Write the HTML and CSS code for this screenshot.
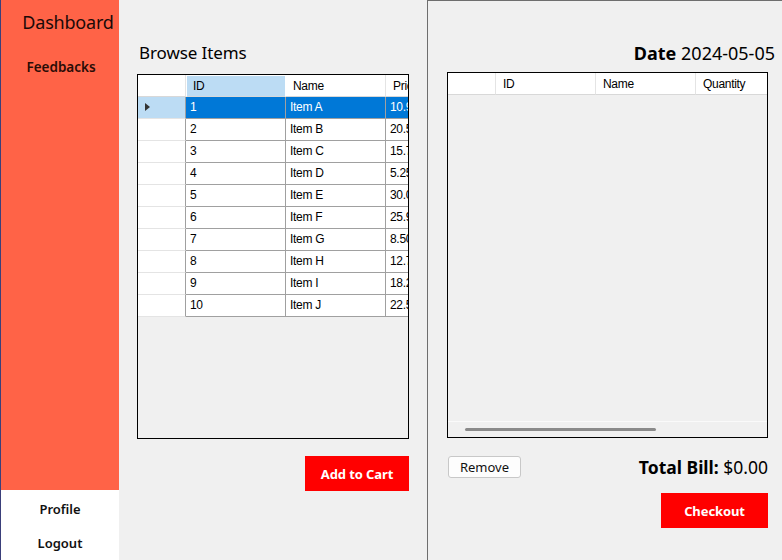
FILE: index.html
```html
<!DOCTYPE html>
<html>
<head>
<meta charset="utf-8">
<link rel="stylesheet" href="styles.css">
</head>
<body>
<div class="app">
  <aside class="sidebar">
    <div class="side-top">
      <div class="brand">Dashboard</div>
      <div class="side-link">Feedbacks</div>
    </div>
    <div class="side-bottom">
      <div class="side-link">Profile</div>
      <div class="side-link">Logout</div>
    </div>
  </aside>

  <section class="browse">
    <h1 class="title">Browse Items</h1>
    <div class="grid grid-items">
      <div class="row head">
        <div class="rh"></div>
        <div class="hc sel-col">ID</div>
        <div class="hc">Name</div>
        <div class="hc">Price</div>
      </div>
      <div class="row selected">
        <div class="rh"><span class="arrow"></span></div>
        <div class="c">1</div><div class="c">Item A</div><div class="c">10.99</div>
      </div>
      <div class="row"><div class="rh"></div><div class="c">2</div><div class="c">Item B</div><div class="c">20.50</div></div>
      <div class="row"><div class="rh"></div><div class="c">3</div><div class="c">Item C</div><div class="c">15.75</div></div>
      <div class="row"><div class="rh"></div><div class="c">4</div><div class="c">Item D</div><div class="c">5.25</div></div>
      <div class="row"><div class="rh"></div><div class="c">5</div><div class="c">Item E</div><div class="c">30.00</div></div>
      <div class="row"><div class="rh"></div><div class="c">6</div><div class="c">Item F</div><div class="c">25.99</div></div>
      <div class="row"><div class="rh"></div><div class="c">7</div><div class="c">Item G</div><div class="c">8.50</div></div>
      <div class="row"><div class="rh"></div><div class="c">8</div><div class="c">Item H</div><div class="c">12.75</div></div>
      <div class="row"><div class="rh"></div><div class="c">9</div><div class="c">Item I</div><div class="c">18.25</div></div>
      <div class="row"><div class="rh"></div><div class="c">10</div><div class="c">Item J</div><div class="c">22.50</div></div>
    </div>
    <div class="actions">
      <button class="btn-red add">Add to Cart</button>
    </div>
  </section>

  <section class="cart">
    <div class="date"><b>Date</b> 2024-05-05</div>
    <div class="grid grid-cart">
      <div class="row head">
        <div class="rh"></div>
        <div class="hc">ID</div>
        <div class="hc">Name</div>
        <div class="hc">Quantity</div>
      </div>
      <div class="cart-body"></div>
      <div class="hscroll"><div class="thumb"></div></div>
    </div>
    <div class="cart-foot">
      <button class="btn-remove">Remove</button>
      <div class="total"><b>Total Bill:</b> $0.00</div>
    </div>
    <div class="checkout-row">
      <button class="btn-red checkout">Checkout</button>
    </div>
  </section>
</div>
</body>
</html>
```

FILE: styles.css
```css
* { box-sizing: border-box; }
html, body { margin: 0; padding: 0; }
body {
  width: 782px;
  height: 560px;
  overflow: hidden;
  background: #f0f0f0;
  font-family: "Noto Sans", "Open Sans", sans-serif;
  color: #000;
}
.app {
  display: flex;
  height: 560px;
}

/* Sidebar */
.sidebar {
  width: 119px;
  flex: none;
  display: flex;
  flex-direction: column;
  border-left: 1px solid #3a3f7a;
}
.side-top {
  flex: 1;
  background: #ff6347;
  display: flex;
  flex-direction: column;
  align-items: center;
}
.brand {
  font-size: 18px;
  margin-top: 10px;
  padding-left: 16px;
  letter-spacing: -0.2px;
  color: #1a0a08;
}
.side-link {
  font-size: 13px;
  font-weight: 600;
  text-align: center;
  color: #111;
}
.side-top .side-link {
  margin-top: 24px;
  font-size: 13.5px;
  padding-left: 2px;
  color: #2a0c06;
}
.side-bottom {
  height: 70px;
  background: #fff;
  display: flex;
  flex-direction: column;
  justify-content: space-around;
  padding: 2px 0 0;
}

/* Browse section */
.browse {
  width: 308px;
  flex: none;
  padding: 42px 0 0 18px;
  display: flex;
  flex-direction: column;
}
.title {
  margin: 0 0 10px 2px;
  font-size: 17px;
  font-weight: 400;
  line-height: 22px;
  letter-spacing: -0.1px;
}

/* Data grids */
.grid {
  border: 1px solid #000;
  background: #f0f0f0;
  overflow: hidden;
  font-family: "Liberation Sans", Arial, sans-serif;
  font-size: 12px;
  letter-spacing: -0.3px;
}
.grid-items {
  width: 272px;
  height: 365px;
}
.row {
  display: grid;
  grid-template-columns: 48px 100px 100px 100px;
  height: 22px;
}
.row > div {
  height: 22px;
  line-height: 21px;
  white-space: nowrap;
  overflow: hidden;
}
.rh {
  background: #fff;
  border-right: 1px solid #a0a0a0;
  border-bottom: 1px solid #e4e4e4;
  position: relative;
}
.head .rh {
  border-right: 1px solid #e4e4e4;
  border-bottom: 1px solid #d8d8d8;
}
.row > .hc {
  background: #fff;
  padding-left: 7px;
  line-height: 23px;
  border-right: 1px solid #e4e4e4;
  border-bottom: 1px solid #d8d8d8;
}
.row > .hc.sel-col {
  background: #bcdcf4;
  border-right: 1px solid #fff;
  border-left: 1px solid #fff;
  border-top: 1px solid #fff;
  line-height: 21px;
  padding-left: 6px;
}
.c {
  background: #fff;
  padding-left: 4px;
  border-right: 1px solid #a0a0a0;
  border-bottom: 1px solid #a0a0a0;
}
.selected .c {
  background: #0078d7;
  color: #fff;
}
.selected .rh {
  background: #bcdcf4;
}
.arrow {
  position: absolute;
  left: 7px;
  top: 6px;
  width: 0;
  height: 0;
  border-top: 4px solid transparent;
  border-bottom: 4px solid transparent;
  border-left: 5px solid #333;
}

/* Actions */
.actions {
  display: flex;
  justify-content: flex-end;
  width: 272px;
  margin-top: 17px;
}
.btn-red {
  background: #ff0000;
  color: #fff;
  border: none;
  font-family: "Noto Sans", "Open Sans", sans-serif;
  font-weight: 700;
  font-size: 13px;
  padding: 0;
  letter-spacing: -0.1px;
}
.add {
  width: 104px;
  height: 35px;
}

/* Cart */
.cart {
  flex: 1;
  border-left: 1px solid #6e6e6e;
  border-top: 1px solid #6e6e6e;
  padding: 0 7px 0 19px;
  display: flex;
  flex-direction: column;
}
.date {
  text-align: right;
  font-size: 18px;
  line-height: 22px;
  margin-top: 41px;
  margin-bottom: 8px;
}
.date b { font-weight: 700; }
.grid-cart {
  width: 321px;
  height: 366px;
  display: flex;
  flex-direction: column;
}
.grid-cart .row {
  grid-template-columns: 48px 100px 100px 100px;
  flex: none;
}
.cart-body {
  flex: 1;
}
.hscroll {
  height: 16px;
  border-top: 1px solid #fafafa;
  position: relative;
  flex: none;
}
.thumb {
  position: absolute;
  left: 17px;
  top: 6px;
  width: 191px;
  height: 3px;
  border-radius: 2px;
  background: #8a8a8a;
}
.cart-foot {
  width: 321px;
  display: flex;
  justify-content: space-between;
  align-items: center;
  margin-top: 18px;
}
.btn-remove {
  width: 73px;
  height: 22px;
  background: #fdfdfd;
  border: 1px solid #c8c8c8;
  border-radius: 3px;
  font-family: "Noto Sans", "Open Sans", sans-serif;
  font-size: 13px;
  padding: 0;
  color: #111;
  margin-left: 1px;
}
.total {
  font-size: 17.5px;
  line-height: 22px;
}
.checkout-row {
  width: 321px;
  display: flex;
  justify-content: flex-end;
  margin-top: 15px;
}
.checkout {
  width: 107px;
  height: 35px;
}
```
